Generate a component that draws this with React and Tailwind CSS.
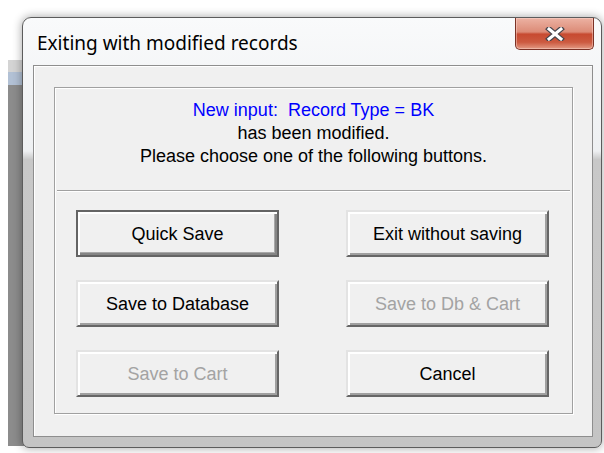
import React from 'react';

function CloseGlyph() {
  return (
    <svg width="20" height="14" viewBox="0 0 20 14">
      <path d="M4 2 L16 12 M16 2 L4 12" stroke="#45454d" strokeWidth="5.5" strokeLinecap="square" fill="none" />
      <path d="M4 2 L16 12 M16 2 L4 12" stroke="#ffffff" strokeWidth="3" strokeLinecap="square" fill="none" />
    </svg>
  );
}

function Btn({ children, disabled, isDefault }) {
  const frame = isDefault
    ? 'border-2 border-[#646464] shadow-[inset_2px_2px_0_#ffffff,inset_-2px_-2px_0_#858585,inset_-3px_-3px_0_#a8a8a8]'
    : 'border-2 border-t-[#e3e3e3] border-l-[#e3e3e3] border-b-[#666666] border-r-[#666666] shadow-[inset_2px_2px_0_#ffffff,inset_-2px_-2px_0_#a0a0a0]';
  return (
    <button
      className={`h-[47px] w-[203px] bg-[#f0f0f0] text-[18px] leading-none ${frame} ${
        disabled ? 'text-[#a3a3a3]' : 'text-black'
      }`}
    >
      {children}
    </button>
  );
}

export default function App() {
  return (
    <div className="relative w-[604px] h-[453px] overflow-hidden bg-white font-['Liberation_Sans',Arial,sans-serif]">
      {/* window sitting behind the dialog */}
      <div className="absolute left-[8px] top-[60px] h-[386px] w-[40px] flex flex-col">
        <div className="h-[12px] bg-[#d4d4d4]" />
        <div className="h-[13px] bg-[#b2c1d5]" />
        <div className="flex-1 bg-[#8c8c8c]" />
      </div>

      {/* dialog */}
      <div className="absolute left-[22px] top-[17px] w-[580px] h-[431px] flex flex-col rounded-t-[9px] rounded-b-[7px] border border-[#5c5c5c] bg-[linear-gradient(to_bottom,#f9fafb_0%,#eef0f2_31%,#c8c8c8_33%,#c4c4c4_100%)] shadow-[0_0_9px_1px_rgba(0,0,0,0.3)]">
        {/* title bar */}
        <div className="h-[47px] flex items-start justify-between shrink-0">
          <span className="pl-[14px] pt-[12px] text-[19px] leading-[26px] text-black font-['Noto_Sans',sans-serif]">
            Exiting with modified records
          </span>
          <div className="mr-[7px] w-[79px] h-[32px] flex items-center justify-center rounded-b-[5px] border border-t-0 border-[#7b3226] bg-[linear-gradient(to_bottom,#ecb2a3_0%,#dc8b77_45%,#c74a31_52%,#cc5a40_78%,#e39a84_100%)] shadow-[inset_0_0_0_1px_rgba(255,220,210,0.45)]">
            <CloseGlyph />
          </div>
        </div>

        {/* client area */}
        <div className="ml-[10px] mr-[8px] mb-[10px] flex-1 border border-[#8e8e8e] bg-[#f0f0f0] shadow-[inset_1px_1px_0_#ffffff]">
          <div className="ml-[20px] mt-[21px] w-[519px] h-[327px] flex flex-col border border-[#a0a0a0] shadow-[inset_1px_1px_0_#ffffff,1px_1px_0_#ffffff]">
            <div className="h-[102px] pt-[11px] text-center text-[18px] leading-[23px] text-black">
              <p className="text-[#0000ff]">New input:&nbsp; Record Type = BK</p>
              <p>has been modified.</p>
              <p>Please choose one of the following buttons.</p>
            </div>
            <div className="mx-[2px] border-t border-b border-t-[#a0a0a0] border-b-white" />
            <div className="grid grid-cols-[203px_203px] gap-x-[67px] gap-y-[23px] pl-[21px] pt-[18px]">
              <Btn isDefault>Quick Save</Btn>
              <Btn>Exit without saving</Btn>
              <Btn>Save to Database</Btn>
              <Btn disabled>Save to Db &amp; Cart</Btn>
              <Btn disabled>Save to Cart</Btn>
              <Btn>Cancel</Btn>
            </div>
          </div>
        </div>
      </div>
    </div>
  );
}
